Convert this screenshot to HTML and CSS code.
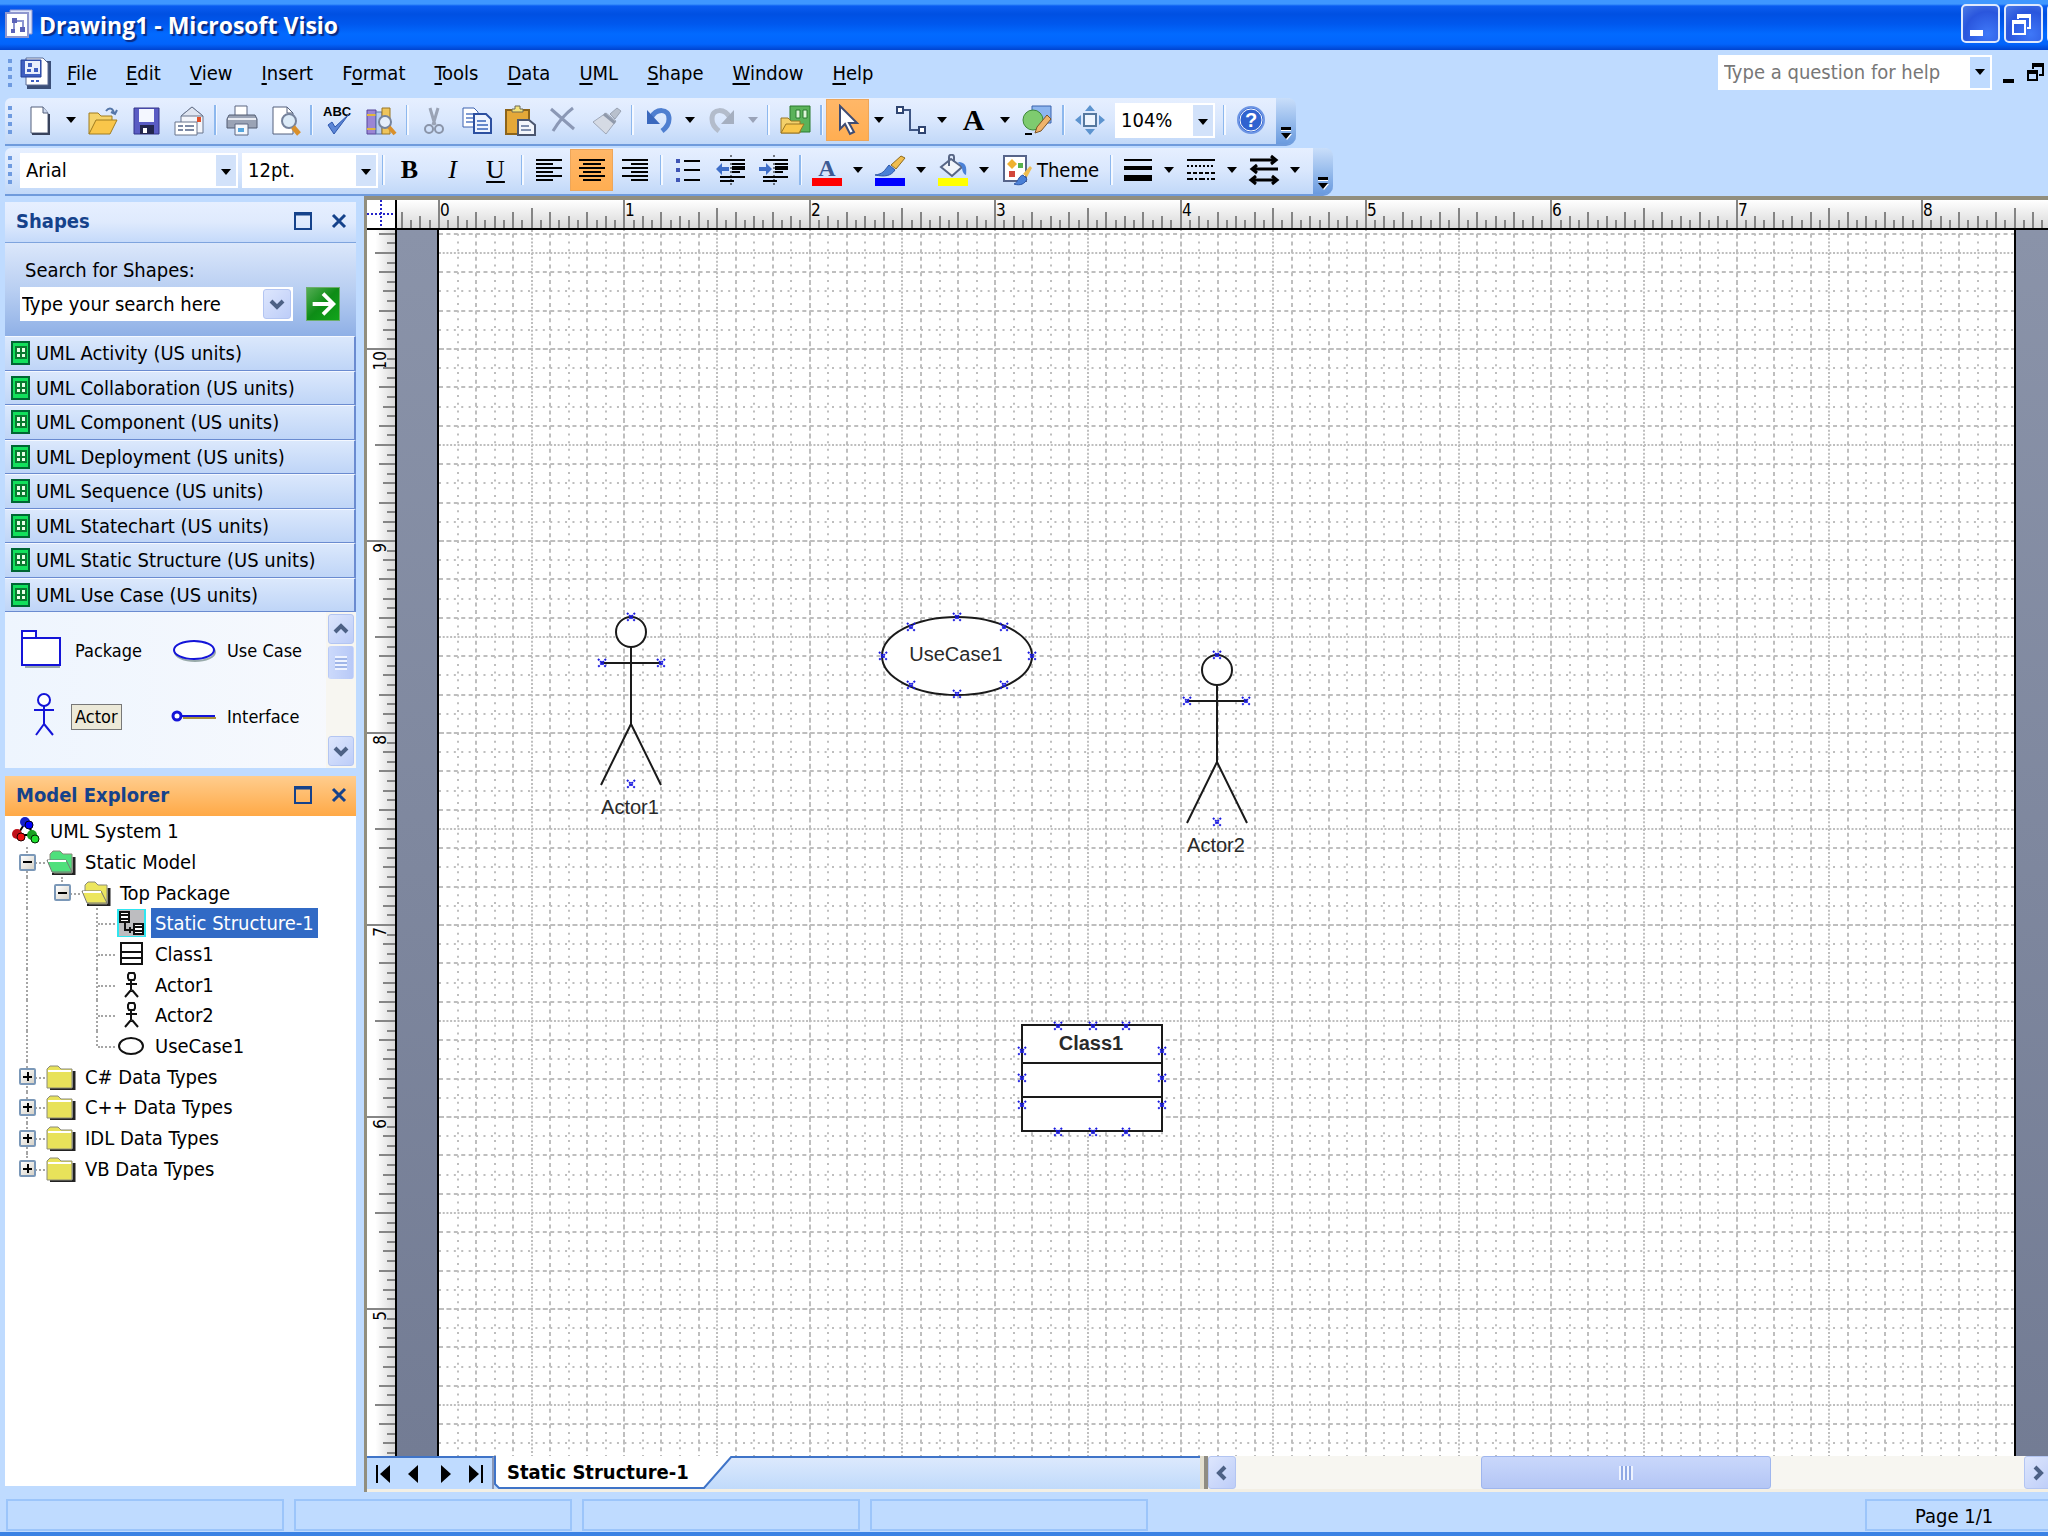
FILE: index.html
```html
<!DOCTYPE html>
<html lang="en">
<head>
  <meta charset="UTF-8">
  <meta name="viewport" content="width=device-width, initial-scale=1.0">
  <title>Drawing1 - Microsoft Visio</title>
  <link rel="stylesheet" href="styles.css">
</head>
<body>

  <!-- shared symbols -->
  <svg class="defs" width="0" height="0" aria-hidden="true">
    <symbol id="cross" viewBox="0 0 10 10"><path d="M1 1l8 8M9 1l-8 8" stroke="#1a1ae0" stroke-width="2" stroke-dasharray="2 1" fill="none"/></symbol>
    <symbol id="stencil" viewBox="0 0 20 24">
      <rect x="1" y="1" width="17" height="22" fill="#12e05c" stroke="#063" stroke-width="2"/>
      <path d="M5 6h10v11H5z" fill="#e8ffe8" stroke="#0a7a30" stroke-width="2"/><path d="M10 6v11M5 12h10" stroke="#0a7a30" stroke-width="2"/>
    </symbol>
    <symbol id="folder" viewBox="0 0 30 26">
      <path d="M4 25h24V7" fill="none" stroke="#222" stroke-width="3"/>
      <path d="M1 24V5l3-3h8l3 3h11v19z" fill="#e8e25a" stroke="#8a8a7a"/><path d="M2 7h23" stroke="#fff" stroke-width="2"/>
    </symbol>
    <symbol id="folder-open" viewBox="0 0 30 26">
      <path d="M6 25h22V8" fill="none" stroke="#222" stroke-width="3"/>
      <path d="M4 12V5l3-3h7l3 3h9v19H8z" fill="currentColor" stroke="#8a8a7a"/>
      <path d="M1 11h19l6 12H6z" fill="currentColor" stroke="#777"/><path d="M2 12h18" stroke="#fff" stroke-width="2"/>
    </symbol>
    <symbol id="actor-small" viewBox="0 0 28 28"><path d="M12 2h5l1 2v3l-1 2h-5l-1-2V4zM14 9v10M9 13h11M14 19l-6 7M15 19l6 7" fill="none" stroke="#111" stroke-width="2"/></symbol>
    <symbol id="maximize" viewBox="0 0 18 18"><path d="M1 1h16v16H1z" fill="none" stroke="#15428b" stroke-width="2"/><path d="M1 2h16" stroke="#15428b" stroke-width="3"/></symbol>
    <symbol id="close" viewBox="0 0 18 18"><path d="M3 3l12 12M15 3L3 15" stroke="#15428b" stroke-width="3"/></symbol>
    <symbol id="chevron" viewBox="0 0 18 18"><path d="M3 6l6 6 6-6" fill="none" stroke="#4d6185" stroke-width="4"/></symbol>
  </svg>

  <header class="titlebar">
    <svg width="28" height="30" viewBox="0 0 28 30">
      <path d="M5 1h22v24H5z" fill="#dfe6fb" stroke="#8f97cf"/><path d="M1 4h22v24H1z" fill="#fff" stroke="#8f97cf" stroke-width="2"/>
      <path d="M7 9h5v5H7zM15 18h5v5h-5zM6 20h4v4H6z" fill="#5a62b8"/><path d="M9 14v6M12 12h6v6" fill="none" stroke="#8d96d2" stroke-width="2"/>
    </svg>
    <h1>Drawing1 - Microsoft Visio</h1>
    <div class="window-buttons">
      <button aria-label="Minimize"><svg width="38" height="38"><path d="M9 25h13v6H9z" fill="#fff"/></svg></button>
      <button aria-label="Restore"><svg width="38" height="38"><path d="M14 14V11h12v12h-3M9 17h12v12H9z" fill="none" stroke="#fff" stroke-width="2"/><path d="M13 11h14M8 17h14" stroke="#fff" stroke-width="4"/></svg></button>
      <button class="close" aria-label="Close"></button>
    </div>
  </header>

  <nav class="menubar">
    <span class="grip"></span>
    <svg class="doc-icon" width="32" height="34" viewBox="0 0 32 34">
      <path d="M9 5h22v28H7V26h2z" fill="#3b4f78"/><path d="M6 2h17l5 5v22H6z" fill="#fff" stroke="#5b6a94"/>
      <path d="M1 4h20v17H1z" fill="#3f5fc0" stroke="#23409a"/><path d="M5 5h15v13H5z" fill="#e9effc"/>
      <path d="M8 7h4v4H8zM14 12h4v4h-4zM7 13h4v3H7z" fill="#3f5fc0"/><path d="M11 25h3M16 25h3" stroke="#3f5fc0" stroke-width="2"/>
    </svg>
    <ul>
      <li><a href="#"><u>F</u>ile</a></li>
      <li><a href="#"><u>E</u>dit</a></li>
      <li><a href="#"><u>V</u>iew</a></li>
      <li><a href="#"><u>I</u>nsert</a></li>
      <li><a href="#">F<u>o</u>rmat</a></li>
      <li><a href="#"><u>T</u>ools</a></li>
      <li><a href="#"><u>D</u>ata</a></li>
      <li><a href="#"><u>U</u>ML</a></li>
      <li><a href="#"><u>S</u>hape</a></li>
      <li><a href="#"><u>W</u>indow</a></li>
      <li><a href="#"><u>H</u>elp</a></li>
    </ul>
    <div class="help-box">
      <input type="text" placeholder="Type a question for help" aria-label="Type a question for help">
      <button class="arrow" aria-label="Recent questions"></button>
    </div>
    <button class="mdi" aria-label="Minimize drawing"><svg width="32" height="24"><path d="M11 18h11v4H11z"/></svg></button>
    <button class="mdi" aria-label="Restore drawing"><svg width="22" height="24"><path d="M9 8V4h10v10h-4M4 11h9v8H4z" fill="none" stroke="#000" stroke-width="2"/><path d="M8 4h12M3 11h11" stroke="#000" stroke-width="4"/></svg></button>
  </nav>

  <!-- standard toolbar -->
  <div class="toolbar" role="toolbar" aria-label="Standard">
    <span class="grip"></span>
    <button class="tool" aria-label="New"><svg><path d="M7 3h12l5 6v20H7z" fill="#fff" stroke="#55617c"/><path d="M19 3v6h5" fill="#cdd8ee" stroke="#55617c"/><path d="M25 10v20H8" fill="none" stroke="#39435c" stroke-width="2"/></svg></button>
    <button class="arrow" aria-label="New options"></button>
    <button class="tool" aria-label="Open"><svg><path d="M2 30V9h9l3 3h11v7" fill="#f5d36b" stroke="#a07c20"/><path d="M2 30l7-14h21l-7 14z" fill="#f9c64a" stroke="#a07c20"/><path d="M19 7c3-4 7-3 8 2M24 8l4 2 2-4" fill="none" stroke="#5576a8" stroke-width="2"/></svg></button>
    <button class="tool" aria-label="Save"><svg><path d="M4 4h25v26H4z" fill="#5a5cc4" stroke="#33358a"/><path d="M9 5h15v13H9z" fill="#f4f7ff"/><path d="M10 21h14v9H10z" fill="#23264e"/><path d="M13 24h4v5h-4z" fill="#fff"/></svg></button>
    <button class="tool" aria-label="E-mail"><svg><path d="M8 12l11-9 11 9v17H8z" fill="#f3f5fb" stroke="#69748c"/><path d="M8 12l11-9 11 9z" fill="#dfe5f1" stroke="#69748c"/><path d="M24 13h4v5h-4z" fill="#e0502a"/><path d="M2 18h22v13H2z" fill="#fff" stroke="#69748c"/><path d="M5 22h5M5 26h5M12 22h9M12 26h9" stroke="#7d8aa5" stroke-width="2"/></svg></button>
    <span class="sep"></span>
    <button class="tool" aria-label="Print"><svg><path d="M9 2h12v10H9z" fill="#fff" stroke="#5c6780"/><path d="M3 11h26l2 4v9H1v-9z" fill="#9aa3b5" stroke="#535d73"/><path d="M2 15h28" stroke="#e8ebf2" stroke-width="2"/><path d="M9 20h13v11H9z" fill="#f4f7fc" stroke="#5c6780"/><path d="M12 24h6v4h-6z" fill="#58a6dd"/></svg></button>
    <button class="tool" aria-label="Print Preview"><svg><path d="M4 3h14l6 6v21H4z" fill="#fff" stroke="#55617c"/><path d="M18 3v6h6" fill="none" stroke="#55617c"/><circle cx="20" cy="17" r="7" fill="#dcebf8" stroke="#76839c" stroke-width="2"/><path d="M24 23l6 7" stroke="#d9902c" stroke-width="5"/></svg></button>
    <span class="sep"></span>
    <button class="tool" aria-label="Spelling"><svg><text x="1" y="12" class="abc">ABC</text><path d="M6 18l6 9 15-20-14 13-3-5z" fill="#5c86d6" stroke="#2e57ad" transform="translate(0 3)"/></svg></button>
    <button class="tool" aria-label="Research"><svg><path d="M2 6h9v24H2z" fill="#9b86d4" stroke="#58479a"/><path d="M2 11h9M2 25h9" stroke="#e2b63d" stroke-width="2"/><path d="M11 8h6v22h-6z" fill="#b7cdf2" stroke="#5872a8"/><path d="M17 4h8v26h-8z" fill="#efc55c" stroke="#9a7724"/><circle cx="20" cy="18" r="6" fill="#e6eefb" stroke="#76839c" stroke-width="2"/><path d="M24 23l6 7" stroke="#d9902c" stroke-width="4"/></svg></button>
    <span class="sep"></span>
    <button class="tool" aria-label="Cut"><svg><path d="M12 4l5 17M20 4l-5 17" stroke="#9aa3b5" stroke-width="3"/><circle cx="11" cy="25" r="4" fill="none" stroke="#8a94a8" stroke-width="2"/><circle cx="21" cy="25" r="4" fill="none" stroke="#8a94a8" stroke-width="2"/></svg></button>
    <button class="tool" aria-label="Copy"><svg><path d="M2 4h11l4 4v15H2z" fill="#fff" stroke="#3d62b0"/><path d="M5 10h8M5 14h8M5 18h8" stroke="#7f9bd2" stroke-width="2"/><path d="M13 10h12l5 5v14H13z" fill="#eef4ff" stroke="#2d50a0" stroke-width="2"/><path d="M16 17h9M16 21h11M16 25h11" stroke="#6487ca" stroke-width="2"/></svg></button>
    <button class="tool" aria-label="Paste"><svg><path d="M2 6h23v24H2z" fill="#e4a838" stroke="#8d641a" stroke-width="2"/><path d="M8 8V5h3V2h5v3h3v3z" fill="#f3e37a" stroke="#6e6a52"/><path d="M14 16h11l6 5v10H14z" fill="#f3f6fc" stroke="#4b566f" stroke-width="2"/><path d="M17 22h8M17 26h10" stroke="#8090b0" stroke-width="2"/></svg></button>
    <button class="tool" aria-label="Delete"><svg><path d="M4 5l23 20M26 4C18 10 12 17 6 27" fill="none" stroke="#8b98b5" stroke-width="3"/></svg></button>
    <button class="tool" aria-label="Format Painter"><svg><path d="M20 10l7-6 4 3-6 8z" fill="#b8c0cd" stroke="#9aa3b3"/><path d="M3 18l13-9 10 8-10 13z" fill="#d5dae4" stroke="#9fa8b8"/><path d="M14 10l11 9" stroke="#8f99ab" stroke-width="3"/></svg></button>
    <span class="sep"></span>
    <button class="tool" aria-label="Undo"><svg><path d="M8 14c5-10 18-10 18 1 0 6-3 9-7 12" fill="none" stroke="#4f7fd0" stroke-width="5"/><path d="M4 6v14h13z" fill="#3a68bd"/></svg></button>
    <button class="arrow" aria-label="Undo history"></button>
    <button class="tool" aria-label="Redo"><svg><path d="M24 14C19 4 6 4 6 15c0 6 3 9 7 12" fill="none" stroke="#b3bccb" stroke-width="5"/><path d="M28 6v14H15z" fill="#a5afc0"/></svg></button>
    <button class="arrow dim" aria-label="Redo history"></button>
    <span class="sep"></span>
    <button class="tool" aria-label="Shapes"><svg><path d="M11 2h20v26H11z" fill="#5bb35a" stroke="#2b7a2f"/><path d="M17 6h4v8h-4zM24 6h4v8h-4z" fill="#dff5da" stroke="#2b7a2f"/><path d="M2 29V14h7l3 3h9v12z" fill="#f3d06a" stroke="#9a7724"/><path d="M2 29l5-9h18l-5 9z" fill="#f9c64a" stroke="#9a7724"/></svg></button>
    <span class="sep"></span>
    <button class="tool active" aria-label="Pointer Tool"><svg><path d="M8 2v23l5-5 5 10 4-2-5-9h8z" fill="#fff" stroke="#3f4d74" stroke-width="2"/></svg></button>
    <button class="arrow" aria-label="Pointer options"></button>
    <button class="tool" aria-label="Connector Tool"><svg><path d="M7 6h8v20h9" fill="none" stroke="#3f5684" stroke-width="2"/><path d="M2 3h6v6H2zM24 23h6v6h-6z" fill="#fff" stroke="#2f4470" stroke-width="2"/></svg></button>
    <button class="arrow" aria-label="Connector options"></button>
    <button class="tool letter-a" aria-label="Text Tool">A</button>
    <button class="arrow" aria-label="Text options"></button>
    <button class="tool" aria-label="Drawing Tools"><svg><path d="M11 2h19v17H11z" fill="#8db6ef" stroke="#3a62ad"/><circle cx="12" cy="16" r="10" fill="#7ecb6f" stroke="#3e8a38"/><path d="M14 29l2-6 10-12 4 4-10 12z" fill="#efb36a" stroke="#7c5426"/><path d="M4 30h7" stroke="#000" stroke-width="2"/></svg></button>
    <span class="sep"></span>
    <button class="tool" aria-label="Pan and Zoom"><svg><path d="M16 1l5 6H11zM16 31l5-6H11zM1 16l6-5v10zM31 16l-6-5v10z" fill="#5d94cf"/><path d="M10 10h12v12H10z" fill="#eef5fe" stroke="#55789f" stroke-width="2"/></svg></button>
    <label class="combo zoom"><select aria-label="Zoom"><option>104%</option></select></label>
    <span class="sep"></span>
    <button class="tool" aria-label="Help"><svg><circle cx="16" cy="16" r="13" fill="#2f62cf" stroke="#6d95e4" stroke-width="2"/><circle cx="16" cy="16" r="11" fill="none" stroke="#fff"/><text x="16" y="23" class="qmark">?</text></svg></button>
    <button class="more" aria-label="Toolbar options"></button>
  </div>

  <!-- formatting toolbar -->
  <div class="toolbar formatting" role="toolbar" aria-label="Formatting">
    <span class="grip"></span>
    <label class="combo font"><select aria-label="Font"><option>Arial</option></select></label>
    <label class="combo size"><select aria-label="Font size"><option>12pt.</option></select></label>
    <span class="sep"></span>
    <button class="tool serif"><b>B</b></button>
    <button class="tool serif"><i>I</i></button>
    <button class="tool serif"><u>U</u></button>
    <span class="sep"></span>
    <button class="tool" aria-label="Align Left"><svg><path d="M3 6h26M3 10h17M3 14h26M3 18h17M3 22h26M3 26h17" stroke="#000" stroke-width="2"/></svg></button>
    <button class="tool active" aria-label="Align Center"><svg><path d="M3 6h26M7 10h18M3 14h26M7 18h18M3 22h26M7 26h18" stroke="#000" stroke-width="2"/></svg></button>
    <button class="tool" aria-label="Align Right"><svg><path d="M3 6h26M12 10h17M3 14h26M12 18h17M3 22h26M12 26h17" stroke="#000" stroke-width="2"/></svg></button>
    <span class="sep"></span>
    <button class="tool" aria-label="Bullets"><svg><path d="M12 7h16M12 16h16M12 26h16" stroke="#000" stroke-width="2"/><path d="M4 5h4v4H4zM4 14h4v4H4zM4 24h4v4H4z" fill="#3f55b5"/></svg></button>
    <button class="tool" aria-label="Decrease Indent"><svg><path d="M5 6h25M17 10h13M17 18h8M5 23h25M5 27h14" stroke="#000" stroke-width="2"/><path d="M17 14h13" stroke="#000" stroke-width="4"/><path d="M16 1v30" stroke="#000" stroke-dasharray="2 2"/><path d="M1 15l6-6v4h7v4H7v4z" fill="#3f6fc9"/></svg></button>
    <button class="tool" aria-label="Increase Indent"><svg><path d="M5 6h25M17 10h13M17 18h8M5 23h25M5 27h14" stroke="#000" stroke-width="2"/><path d="M17 14h13" stroke="#000" stroke-width="4"/><path d="M16 1v30" stroke="#000" stroke-dasharray="2 2"/><path d="M14 15L8 9v4H1v4h7v4z" fill="#3f6fc9"/></svg></button>
    <span class="sep"></span>
    <button class="tool" aria-label="Text Color"><svg><text x="16" y="22" class="color-a">A</text><path d="M1 24h30v8H1z" fill="#f00"/></svg></button>
    <button class="arrow" aria-label="Text color options"></button>
    <button class="tool" aria-label="Line Color"><svg><path d="M1 21c8-1 9-4 14-10l6 5c-4 6-10 7-20 5z" fill="#4a80d6" stroke="#2d57a8"/><path d="M17 11l10-9 4 2-9 11z" fill="#f0bd4e" stroke="#8f6a1c"/><path d="M1 24h30v8H1z" fill="#00f"/></svg></button>
    <button class="arrow" aria-label="Line color options"></button>
    <button class="tool" aria-label="Fill Color"><svg><path d="M4 13L14 5l11 8-10 9z" fill="#f2f5fa" stroke="#586685" stroke-width="2"/><path d="M12 12V3c0-3 5-3 5 0v5" fill="none" stroke="#586685" stroke-width="2"/><path d="M21 8c8 0 9 5 8 13-3-1-4-5-4-8z" fill="#4a80d6"/><path d="M1 24h30v8H1z" fill="#ff0"/></svg></button>
    <button class="arrow" aria-label="Fill color options"></button>
    <button class="tool theme"><svg><path d="M3 2h22v25H3z" fill="#fff" stroke="#56648a" stroke-width="2"/><path d="M6 10l5-5 5 5-5 5z" fill="#efb130"/><path d="M17 9h5v5h-5z" fill="#56b24e"/><path d="M8 17h6v6H8z" fill="#d2473c"/><path d="M13 30c4-1 4-8 9-9l4 4c-2 5-7 7-13 5z" fill="#4a80d6" stroke="#2d57a8"/><path d="M22 20l7-8 2 2-5 9z" fill="#f0bd4e"/></svg><span>The<u>m</u>e</span></button>
    <span class="sep"></span>
    <button class="tool" aria-label="Line Weight"><svg><path d="M2 6h28" stroke="#000" stroke-width="2"/><path d="M2 14h28" stroke="#000" stroke-width="4"/><path d="M2 24h28" stroke="#000" stroke-width="6"/></svg></button>
    <button class="arrow" aria-label="Line weight options"></button>
    <button class="tool" aria-label="Line Pattern"><svg><g stroke="#000" stroke-width="2"><path d="M2 6h28"/><path d="M2 12h28" stroke-dasharray="2 2"/><path d="M2 19h28" stroke-dasharray="4 2"/><path d="M2 25h28" stroke-dasharray="6 2 2 2"/></g></svg></button>
    <button class="arrow" aria-label="Line pattern options"></button>
    <button class="tool" aria-label="Line Ends"><svg><path d="M2 6h26M4 15h26M4 26h24M23 2l5 4-5 4M9 11l-5 4 5 4M8 22l-5 4 5 4M24 22l5 4-5 4" fill="none" stroke="#000" stroke-width="3"/></svg></button>
    <button class="arrow" aria-label="Line ends options"></button>
    <button class="more" aria-label="Toolbar options"></button>
  </div>

  <main>
    <aside>
      <section class="shapes">
        <div class="panel-header">
          <h2>Shapes</h2>
          <button aria-label="Maximize Shapes"><svg><use href="#maximize"/></svg></button>
          <button aria-label="Close Shapes"><svg><use href="#close"/></svg></button>
        </div>
        <form class="search">
          <label for="search">Search for Shapes:</label>
          <div class="search-row">
            <div class="search-box">
              <input id="search" type="text" value="Type your search here">
              <button type="button" class="xp-button" aria-label="Previous searches"><svg><use href="#chevron"/></svg></button>
            </div>
            <button type="button" class="go" aria-label="Search"><svg width="32" height="32" viewBox="0 0 34 34"><path d="M6 17h20M17 6l11 11-11 11" fill="none" stroke="#fff" stroke-width="4"/></svg></button>
          </div>
        </form>
        <ul class="stencils">
          <li><svg><use href="#stencil"/></svg>UML Activity (US units)</li>
          <li><svg><use href="#stencil"/></svg>UML Collaboration (US units)</li>
          <li><svg><use href="#stencil"/></svg>UML Component (US units)</li>
          <li><svg><use href="#stencil"/></svg>UML Deployment (US units)</li>
          <li><svg><use href="#stencil"/></svg>UML Sequence (US units)</li>
          <li><svg><use href="#stencil"/></svg>UML Statechart (US units)</li>
          <li><svg><use href="#stencil"/></svg>UML Static Structure (US units)</li>
          <li><svg><use href="#stencil"/></svg>UML Use Case (US units)</li>
        </ul>
        <div class="masters">
          <ul>
            <li><svg viewBox="0 0 48 48"><path d="M8 40h34V14" fill="none" stroke="#9aa" stroke-width="2"/><path d="M5 4h14v7H5zM5 11h38v27H5z" fill="#fff" stroke="#1414d8" stroke-width="2"/></svg><span>Package</span></li>
            <li><svg viewBox="0 0 48 48"><ellipse cx="26" cy="25" rx="20" ry="9" fill="none" stroke="#9aa" stroke-width="2"/><ellipse cx="25" cy="23" rx="20" ry="9" fill="#fff" stroke="#1414d8" stroke-width="2"/></svg><span>Use Case</span></li>
            <li><svg viewBox="0 0 48 48"><circle cx="27" cy="7" r="6" fill="#fff" stroke="#1414d8" stroke-width="2"/><path d="M27 13v18M17 17h20M27 31l-8 11M27 31l9 11" fill="none" stroke="#1414d8" stroke-width="2"/></svg><span class="selected">Actor</span></li>
            <li><svg viewBox="0 0 48 48"><path d="M14 25h33" stroke="#a8913a" stroke-width="2"/><circle cx="8" cy="23" r="4" fill="#fff" stroke="#1414d8" stroke-width="3"/><path d="M12 23h34" stroke="#1414d8" stroke-width="2"/></svg><span>Interface</span></li>
          </ul>
          <div class="vscroll">
            <button class="xp-button" aria-label="Scroll up"><svg class="up"><use href="#chevron"/></svg></button>
            <span class="thumb"></span>
            <button class="xp-button last" aria-label="Scroll down"><svg><use href="#chevron"/></svg></button>
          </div>
        </div>
      </section>

      <section class="explorer">
        <div class="panel-header">
          <h2>Model Explorer</h2>
          <button aria-label="Maximize Model Explorer"><svg><use href="#maximize"/></svg></button>
          <button aria-label="Close Model Explorer"><svg><use href="#close"/></svg></button>
        </div>
        <div class="tree-pane">
          <ul class="tree">
            <li><svg viewBox="0 0 28 28"><path d="M13 6L6 17M16 8l6 11M8 18h14" stroke="#000" stroke-width="2"/><circle cx="13" cy="5" r="5" fill="#1520c8"/><circle cx="17" cy="8" r="4" fill="#00f" stroke="#001"/><circle cx="5" cy="17" r="5" fill="#c01018"/><circle cx="9" cy="20" r="4" fill="#f01010" stroke="#200"/><circle cx="20" cy="18" r="5" fill="#18a020"/><circle cx="23" cy="22" r="4" fill="#20e030" stroke="#020"/></svg><span>UML System 1</span></li>
            <li><i class="cell line tee"><b class="expander open"></b></i><svg class="green" viewBox="0 0 30 26"><use href="#folder-open"/></svg><span>Static Model</span></li>
            <li><i class="cell line"></i><i class="cell line end"><b class="expander open"></b></i><svg class="yellow" viewBox="0 0 30 26"><use href="#folder-open"/></svg><span>Top Package</span></li>
            <li class="selected"><i class="cell line"></i><i class="cell"></i><i class="cell line tee"></i><svg viewBox="0 0 28 28"><path d="M1 0h27v28H1z" fill="#bdbdc0" stroke="#2fe6f0" stroke-width="2"/><path d="M3 3h9v10H3zM17 15h9v10h-9z" fill="#fff" stroke="#111" stroke-width="2"/><path d="M3 6h9M3 10h9M17 18h9M17 22h9M8 13v8h9M13 18v6" fill="none" stroke="#111" stroke-width="2"/></svg><span>Static Structure-1</span></li>
            <li><i class="cell line"></i><i class="cell"></i><i class="cell line tee"></i><svg viewBox="0 0 28 28"><path d="M4 3h21v21H4zM4 12h21M4 18h21" fill="#fff" stroke="#111" stroke-width="2"/></svg><span>Class1</span></li>
            <li><i class="cell line"></i><i class="cell"></i><i class="cell line tee"></i><svg viewBox="0 0 28 28"><use href="#actor-small"/></svg><span>Actor1</span></li>
            <li><i class="cell line"></i><i class="cell"></i><i class="cell line tee"></i><svg viewBox="0 0 28 28"><use href="#actor-small"/></svg><span>Actor2</span></li>
            <li><i class="cell line"></i><i class="cell"></i><i class="cell line end"></i><svg viewBox="0 0 28 28"><ellipse cx="14" cy="14" rx="12" ry="8" fill="#fff" stroke="#111" stroke-width="2"/></svg><span>UseCase1</span></li>
            <li><i class="cell line tee"><b class="expander"></b></i><svg viewBox="0 0 30 26"><use href="#folder"/></svg><span>C# Data Types</span></li>
            <li><i class="cell line tee"><b class="expander"></b></i><svg viewBox="0 0 30 26"><use href="#folder"/></svg><span>C++ Data Types</span></li>
            <li><i class="cell line tee"><b class="expander"></b></i><svg viewBox="0 0 30 26"><use href="#folder"/></svg><span>IDL Data Types</span></li>
            <li><i class="cell line end"><b class="expander"></b></i><svg viewBox="0 0 30 26"><use href="#folder"/></svg><span>VB Data Types</span></li>
          </ul>
        </div>
      </section>
    </aside>

    <section class="document">
      <div class="corner"></div>
      <svg class="ruler-x" id="rulerX"></svg>
      <svg class="ruler-y" id="rulerY"></svg>
      <svg class="canvas">
        <defs>
          <g id="actor">
            <circle cx="0" cy="15" r="15" class="shape"/>
            <path d="M0 30v77M-30 46h60M0 107l-30 61M0 107l30 61" class="shape"/>
          </g>
        </defs>
        <rect x="41" y="-80" width="1577" height="2112" fill="#fff"/>
        <g id="grid"></g>
        <path d="M41 -80v2112M1618 -80v2112" stroke="#000" stroke-width="2"/>

        <use href="#actor" x="234" y="387"/>
        <text x="233" y="584">Actor1</text>

        <ellipse cx="560" cy="426" rx="75" ry="39" class="shape"/>
        <text x="559" y="431">UseCase1</text>

        <use href="#actor" x="820" y="425"/>
        <text x="819" y="622">Actor2</text>

        <path d="M625 795h140v106h-140zM625 833h140M625 867h140" class="shape"/>
        <text x="694" y="820" class="bold">Class1</text>
        <g id="points"></g>
      </svg>
      <footer>
        <div class="page-nav">
          <button aria-label="First page"><svg width="20" height="22"><path d="M3 2v18" stroke="#000" stroke-width="2"/><path d="M16 2v18L6 11z"/></svg></button>
          <button aria-label="Previous page"><svg width="20" height="22"><path d="M14 2v18L4 11z"/></svg></button>
          <button aria-label="Next page"><svg width="20" height="22"><path d="M6 2v18l10-9z"/></svg></button>
          <button aria-label="Last page"><svg width="20" height="22"><path d="M17 2v18" stroke="#000" stroke-width="2"/><path d="M4 2v18l10-9z"/></svg></button>
        </div>
        <a class="page-tab" href="#"><svg width="240" height="33"><path d="M1 0v28l4 4h205L238 0" fill="#fff" stroke="#3f74c8" stroke-width="2"/></svg><span>Static Structure-1</span></a>
        <div class="hscroll">
          <button class="xp-button" aria-label="Scroll left"><svg class="left"><use href="#chevron"/></svg></button>
          <div class="track"><span class="thumb"></span></div>
          <button class="xp-button" aria-label="Scroll right"><svg class="right"><use href="#chevron"/></svg></button>
        </div>
      </footer>
    </section>
  </main>

  <div class="statusbar">
    <span></span><span></span><span></span><span></span>
    <span class="page">Page 1/1</span>
  </div>

  <script src="script.js"></script>
</body>
</html>
```

FILE: styles.css
```css
* { box-sizing: border-box; }

html {
  --blue: #bfdbff;
  --line: #6f9bdc;
  --navy: #15428b;
  --ui: "DejaVu Sans Condensed", "DejaVu Sans", sans-serif;
}

body {
  margin: 0;
  height: 100vh;
  display: flex;
  flex-direction: column;
  overflow: hidden;
  background: var(--blue);
  font-family: var(--ui);
  font-size: 20px;
  line-height: 24px;
  color: #000;
}

ul { margin: 0; padding: 0; list-style: none; }
h1, h2 { margin: 0; }
button {
  padding: 0;
  border: 0;
  background: none;
  font: inherit;
  color: inherit;
}
svg { display: block; flex: none; }
.defs { position: absolute; }
u { text-decoration-thickness: 2px; text-underline-offset: 3px; }

/* title bar */
.titlebar {
  flex: none;
  height: 50px;
  padding: 0 0 3px 5px;
  display: flex;
  align-items: center;
  gap: 6px;
  overflow: hidden;
  background: linear-gradient(#3f97ff, #3f97ff 4px, #0a5cf0 6px, #0050e2 14px, #0058ee 24px, #026aff 34px, #0264fc 44px, #0043d0);
}
.titlebar h1 {
  flex: 1;
  padding-top: 2px;
  font: bold 23px/30px "Open Sans", sans-serif;
  color: #fff;
  text-shadow: 2px 2px 1px #0b2a80;
}
.window-buttons { display: flex; gap: 4px; margin-right: -38px; }
.window-buttons button {
  width: 39px;
  height: 39px;
  border: 2px solid #dfe9fd;
  border-radius: 5px;
  background: radial-gradient(circle at 70% 80%, #3f78f8, #2a56dd 60%, #4b7be6);
}
.window-buttons .close { background: #d8492a; }
.window-buttons svg { margin: -2px; }

/* menu bar */
.menubar {
  flex: none;
  height: 48px;
  padding: 0 2px 2px 8px;
  display: flex;
  align-items: center;
}
.menubar .doc-icon { margin: 0 15px 0 8px; }
.menubar ul { display: flex; flex: 1; gap: 29px; }
.menubar a { color: #000; text-decoration: none; }
.help-box {
  display: flex;
  width: 274px;
  height: 35px;
  padding: 2px;
  margin-top: -2px;
  background: #fff;
}
.help-box input { flex: 1; min-width: 0; border: 0; padding: 0 4px; font: inherit; }
.help-box input::placeholder { color: #777; opacity: 1; }
.help-box .arrow { background: var(--blue); }

.grip {
  flex: none;
  width: 4px;
  height: 28px;
  background: repeating-linear-gradient(#6f9be0 0 4px, transparent 4px 8px);
}

/* toolbars */
.toolbar {
  flex: none;
  align-self: flex-start;
  height: 48px;
  margin-left: 5px;
  padding: 0 24px 2px 3px;
  position: relative;
  display: flex;
  align-items: center;
  border-bottom: 2px solid var(--line);
  border-radius: 6px 10px 10px 0;
  background: linear-gradient(#e6efff, #d9e7fd 50%, #c1d8f8);
}
.toolbar .grip { margin-right: 6px; }
.tool {
  flex: none;
  width: 43px;
  height: 42px;
  display: flex;
  align-items: center;
  justify-content: center;
}
.tool svg { width: 32px; height: 32px; }
.tool.active { background: linear-gradient(#ffb768, #ffae52); border: 1px solid #eda65a; }
.arrow { flex: none; width: 20px; height: 100%; display: grid; place-items: center; }
.arrow::before {
  content: "";
  border: 5px solid transparent;
  border-top: 6px solid #000;
  border-bottom: 0;
}
.arrow.dim::before { border-top-color: #9aa3b8; }
.sep {
  flex: none;
  width: 3px;
  height: 30px;
  margin: 0 3px 0 4px;
  background: linear-gradient(90deg, #8db8ee 50%, #f4f8ff 50%);
}
.combo {
  position: relative;
  flex: none;
  height: 35px;
  border: 2px solid #fff;
  background: linear-gradient(90deg, #fff calc(100% - 20px), #d2e2fa 0);
}
.combo select {
  appearance: none;
  width: 100%;
  height: 100%;
  padding: 0 4px;
  border: 0;
  background: none;
  font: inherit;
  color: #000;
}
.combo::after {
  content: "";
  position: absolute;
  right: 5px;
  top: 14px;
  border: 5px solid transparent;
  border-top: 6px solid #000;
  border-bottom: 0;
  pointer-events: none;
}
.combo.font { width: 218px; margin: 0 4px 0 2px; }
.combo.size { width: 136px; }
.combo.zoom { width: 100px; margin: 0 4px; }
.serif { font: 26px/30px "Liberation Serif", serif; }
.letter-a { font: bold 30px/32px "Liberation Serif", serif; }
.tool.theme { width: 112px; gap: 4px; }
.abc { font: bold 13px "Liberation Sans", sans-serif; }
.qmark { font: bold 20px "Liberation Sans", sans-serif; fill: #fff; text-anchor: middle; }
.color-a { font: bold 24px "Liberation Serif", serif; fill: #3c5a94; text-anchor: middle; }
.more {
  position: absolute;
  right: 0;
  top: 0;
  width: 20px;
  height: 46px;
  border-radius: 0 8px 8px 0;
  background: linear-gradient(#c9defa, #8fb6ea 60%, #6a9ade);
}
.more::before {
  content: "";
  position: absolute;
  left: 5px;
  top: 29px;
  width: 10px;
  height: 3px;
  background: #000;
  border-bottom: 1px solid #fff;
}
.more::after {
  content: "";
  position: absolute;
  left: 5px;
  top: 35px;
  border: 5px solid transparent;
  border-top: 6px solid #000;
  border-bottom: 0;
  filter: drop-shadow(1px 1px #fff);
}
.formatting { margin-top: 2px; padding-right: 28px; }

/* side panels */
main { flex: 1; min-height: 0; display: flex; }
aside {
  flex: none;
  width: 364px;
  padding: 6px 8px 6px 5px;
  display: flex;
  flex-direction: column;
  gap: 8px;
}
.panel-header {
  height: 41px;
  padding: 0 8px 3px 11px;
  display: flex;
  align-items: center;
  gap: 18px;
  border-bottom: 1px solid #7ea4de;
  background: linear-gradient(#e6efff, #dfeafd 50%, #c5dafa);
  color: var(--navy);
}
.panel-header h2 { flex: 1; font-size: 20px; line-height: 24px; }
.panel-header svg { width: 18px; height: 18px; }
.search {
  height: 93px;
  padding: 15px 16px 15px 15px;
  display: flex;
  flex-direction: column;
  justify-content: space-between;
  background: linear-gradient(#dbe7fb, #b9cff2 50%, #8fb0e6);
}
.search label { padding-left: 5px; }
.search-row { display: flex; justify-content: space-between; }
.search-box { display: flex; width: 273px; height: 34px; padding: 2px; background: #fff; }
.search-box input { flex: 1; min-width: 0; padding: 0; border: 0; font: inherit; }
.go { width: 34px; height: 34px; border: 1px solid #6cae6c; background: linear-gradient(135deg, #55ad55, #0e8c16 50%, #12a51c); }
.xp-button {
  flex: none;
  width: 28px;
  height: 30px;
  display: grid;
  place-items: center;
  border: 1px solid #b3c5f2;
  border-radius: 3px;
  background: linear-gradient(135deg, #dde6fd, #bdcdf8);
}
.xp-button svg { width: 18px; height: 18px; }
.up { transform: rotate(180deg); }
.left { transform: rotate(90deg); }
.right { transform: rotate(-90deg); }

.stencils {
  display: grid;
  grid-template-rows: repeat(8, 1fr);
  height: 276px;
}
.stencils li {
  display: flex;
  align-items: center;
  gap: 5px;
  padding-left: 6px;
  border: solid #6a8bd0;
  border-width: 1px 2px 1px 0;
  border-top-color: #f4f8ff;
  background: linear-gradient(#dbe8fc, #bfd5f7);
}
.stencils svg { width: 20px; height: 24px; }

.masters { display: flex; height: 156px; background: linear-gradient(90deg, #eef5fe, #f7f9fd); }
.masters ul {
  flex: 1;
  display: grid;
  grid-template-columns: 152px 1fr;
  grid-auto-rows: 66px;
  padding-top: 6px;
  font-size: 18px;
}
.masters li { display: flex; align-items: center; gap: 6px; padding-left: 12px; }
.masters li svg { width: 48px; height: 48px; }
.masters span { padding: 0 3px; border: 1px solid transparent; }
.masters .selected { background: #ece9d8; border-color: #777; }
.vscroll {
  width: 30px;
  padding: 2px;
  display: flex;
  flex-direction: column;
  gap: 2px;
  background: #f7f6f1;
}
.vscroll .xp-button { width: 26px; }
.vscroll .last { margin-top: auto; }
.thumb { border: 1px solid #9fb6ee; border-radius: 3px; }
.vscroll .thumb {
  height: 33px;
  background:
    repeating-linear-gradient(#eef3ff 0 2px, #9fb5e8 2px 4px) center / 12px 14px no-repeat,
    linear-gradient(90deg, #cbd9fb, #b8c9f7);
}

.explorer { flex: 1; display: flex; flex-direction: column; }
.explorer .panel-header { height: 40px; border: 0; background: linear-gradient(#ffcd8e, #ffa946); }
.tree-pane { flex: 1; background: #fff; }
.tree {
  display: grid;
  grid-template-rows: repeat(12, 1fr);
  height: 368px;
  padding-left: 5px;
}
.tree li { display: flex; }
.tree li > svg { align-self: center; width: 30px; height: 28px; margin: 0 1px; }
.tree span { align-self: center; padding: 3px 4px; margin-left: 4px; }
.tree .selected span { background: #316ac5; color: #fff; }
.green { color: #4fe07c; }
.yellow { color: #ece65e; }
.cell { position: relative; flex: none; width: 35px; }
.cell.line::before {
  content: "";
  position: absolute;
  left: 16px;
  top: 0;
  bottom: 0;
  border-left: 2px dotted #a5a5a5;
}
.cell.end::before { bottom: 50%; }
.cell.tee::after, .cell.end::after {
  content: "";
  position: absolute;
  left: 18px;
  right: 0;
  top: 50%;
  border-top: 2px dotted #a5a5a5;
}
.expander {
  position: absolute;
  z-index: 1;
  left: 9px;
  top: 7px;
  width: 17px;
  height: 17px;
  border: 2px solid #7b98b8;
  border-radius: 2px;
  background:
    linear-gradient(#000, #000) center / 9px 2px no-repeat,
    linear-gradient(#000, #000) center / 2px 9px no-repeat,
    linear-gradient(135deg, #fff, #d6d2c8);
}
.expander.open {
  background:
    linear-gradient(#000, #000) center / 9px 2px no-repeat,
    linear-gradient(135deg, #fff, #d6d2c8);
}

/* drawing window */
.document {
  flex: 1;
  min-width: 0;
  display: grid;
  grid-template: 30px 1fr 36px / 30px 1fr;
  border: solid #918e7e;
  border-width: 4px 0 0 3px;
  overflow: hidden;
}
.corner {
  border: solid #000;
  border-width: 0 2px 2px 0;
  background:
    repeating-linear-gradient(90deg, #2424c8 0 2px, transparent 2px 4px) center / 100% 2px no-repeat,
    repeating-linear-gradient(#2424c8 0 2px, transparent 2px 4px) center / 2px 100% no-repeat,
    #fff;
}
.ruler-x { width: 100%; height: 30px; border-bottom: 2px solid #000; background: linear-gradient(#fff, #d9d9d9); }
.ruler-y { width: 30px; height: 100%; border-right: 2px solid #000; background: linear-gradient(90deg, #fff 30%, #d9d9d9); }
.ruler-x text, .ruler-y text { font: 17px var(--ui); }
.ruler-y text { text-anchor: end; }
.tick { stroke: #858585; stroke-width: 2px; }
.canvas { width: 100%; height: 100%; min-height: 0; background: linear-gradient(#8a93a9, #737c94); }
.canvas text { font: 20px "Liberation Sans", Arial, sans-serif; text-anchor: middle; fill: #2a2a2a; }
.canvas .bold { font-weight: bold; }
.shape { fill: #fff; stroke: #1a1a1a; stroke-width: 2px; }
.grid-line { stroke: #bebebe; stroke-width: 2px; }

footer {
  grid-column: 1 / -1;
  display: flex;
  border-bottom: 3px solid #f3efe4;
  background: linear-gradient(#3f74c8 2px, #dce9fd 2px, #c0dafb);
}
.page-nav {
  width: 127px;
  padding: 0 7px;
  display: flex;
  align-items: center;
  justify-content: space-between;
  border-top: 2px solid #3f74c8;
  border-right: 2px solid #8a97b5;
  background: var(--blue);
}
.page-tab { position: relative; color: #000; font-weight: bold; text-decoration: none; }
.page-tab span { position: absolute; left: 13px; top: 4px; white-space: nowrap; }
.hscroll {
  width: calc(50% + 12px);
  margin: 0 -4px 0 auto;
  display: flex;
  gap: 2px;
  border-left: 8px ridge #e3dfcf;
  background: #f7f6f1;
}
.hscroll .xp-button { height: 33px; }
.track { flex: 1; display: grid; grid-template-columns: 31fr 37fr 32fr; }
.track .thumb {
  grid-column: 2;
  background:
    repeating-linear-gradient(90deg, #eef3ff 0 2px, #8fa8e4 2px 4px) center / 14px 14px no-repeat,
    linear-gradient(#c9d7fb, #b4c6f5);
}

/* status bar */
.statusbar {
  flex: none;
  height: 44px;
  padding: 7px 0 1px 6px;
  display: flex;
  gap: 10px;
  border-bottom: 4px solid #3a82e4;
}
.statusbar span { width: 278px; border: 2px solid #9cc5fa; }
.statusbar .page {
  width: 183px;
  margin-left: auto;
  border-right: 0;
  padding-left: 48px;
  line-height: 30px;
}
```

FILE: script.js
```js
const NS = "http://www.w3.org/2000/svg";
const STEP_X = 1483 / 160; // twentieth of an inch across
const STEP_Y = 192 / 20; // and down
const ZERO_X = 42; // page left edge in the canvas
const TEN_Y = 119; // the 10 inch mark in the canvas

const grid = document.querySelector("#grid");
const rulerX = document.querySelector("#rulerX");
const rulerY = document.querySelector("#rulerY");

function add(parent, name, attrs, text) {
  const el = document.createElementNS(NS, name);
  for (const key in attrs) el.setAttribute(key, attrs[key]);
  if (text !== undefined) el.textContent = text;
  parent.appendChild(el);
}

// longer ticks on the inch, the half and every fifth
function tickLength(i) {
  if (i % 20 === 0) return 28;
  if (i % 10 === 0) return 20;
  if (i % 4 === 0) return 16;
  if (i % 2 === 0) return 12;
  return 8;
}

function dashes(i, step) {
  const cell = step * 4;
  if (i % 20 === 0) return `5 ${cell / 5 - 5}`;
  if (i % 10 === 0) return `2 ${cell / 10 - 2}`;
  if (i % 4 === 0) return `4 ${cell / 5 - 4}`;
  return `2 ${cell / 5 - 2}`;
}

for (let i = -4; i <= 176; i++) {
  const x = Math.round(ZERO_X + i * STEP_X);
  add(rulerX, "path", { d: `M${x} 28v-${tickLength(i)}`, class: "tick" });
  if (i % 20 === 0) add(rulerX, "text", { x: x + 1, y: 16 }, i / 20);
  if (i > 0 && i < 170 && i % 2 === 0) {
    add(grid, "path", { d: `M${x} ${TEN_Y - 192}V1300`, class: "grid-line", "stroke-dasharray": dashes(i, STEP_Y) });
  }
}

for (let i = -12; i <= 118; i++) {
  const y = Math.round(TEN_Y + i * STEP_Y);
  add(rulerY, "path", { d: `M28 ${y}h-${tickLength(i)}`, class: "tick" });
  if (i % 20 === 0) add(rulerY, "text", { transform: `translate(19 ${y + 2}) rotate(-90)` }, 10 - i / 20);
  if (i % 2 === 0) {
    add(grid, "path", { d: `M${ZERO_X} ${y}H1617`, class: "grid-line", "stroke-dasharray": dashes(i, STEP_X) });
  }
}

// connection points
const points = [
  [234, 387], [205, 433], [264, 433], [234, 554],
  [560, 387], [514, 397], [607, 397], [486, 426], [635, 426], [514, 455], [607, 455], [560, 464],
  [820, 425], [790, 471], [849, 471], [820, 592],
  [661, 796], [696, 796], [729, 796], [625, 821], [765, 821], [625, 848], [765, 848],
  [625, 875], [765, 875], [661, 902], [696, 902], [729, 902],
];
points.forEach(([x, y]) => {
  add(document.querySelector("#points"), "use", { href: "#cross", x: x - 5, y: y - 5, width: 10, height: 10 });
});
```
